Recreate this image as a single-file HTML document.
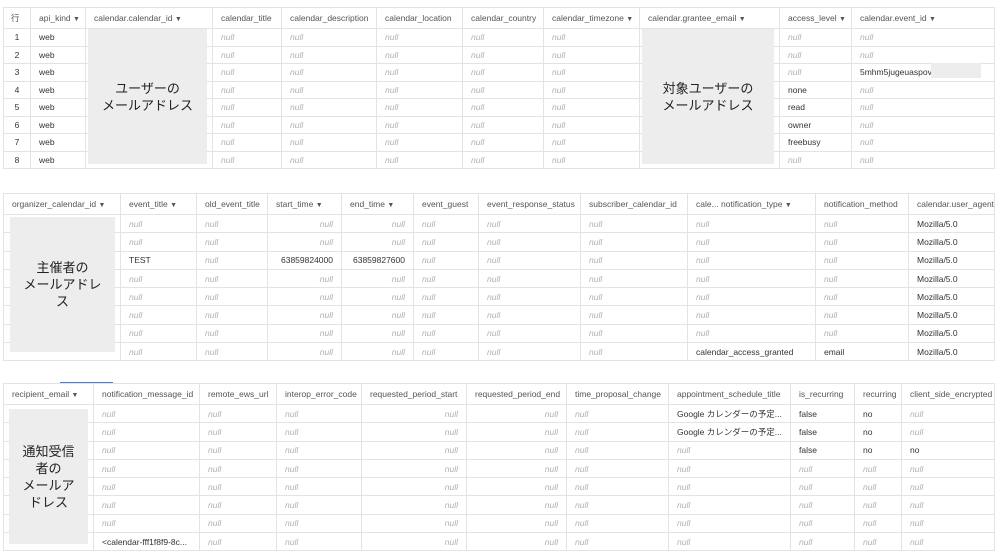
<!DOCTYPE html><html><head><meta charset="utf-8"><style>
body{margin:0;width:1000px;height:554px;background:#fff;position:relative;overflow:hidden;font-family:"Liberation Sans","Noto Sans CJK JP",sans-serif}
table{position:absolute;border-collapse:collapse;table-layout:fixed;font-size:8.5px;color:#333}
td,th{border:1px solid #e3e3e3;padding:0 0 0 8px;white-space:nowrap;overflow:hidden;text-overflow:clip;height:17.3px;text-align:left;font-weight:normal}
table.t1 td{height:16.5px}
th{color:#555;height:20px;font-size:8.5px}
td.n{color:#b0b0b0;font-style:italic}
td.r{text-align:right;padding-right:8px}
td.c{text-align:center;padding:0}
.g{position:absolute;background:#ededed;display:flex;align-items:center;justify-content:center;text-align:center;font-size:13px;color:#222;line-height:17px}
.ar{font-size:7px}
</style></head><body>

<table class="t1" style="left:3px;top:7px;width:992px">
<colgroup><col style="width:27px"><col style="width:55px"><col style="width:127px"><col style="width:69px"><col style="width:95px"><col style="width:86px"><col style="width:81px"><col style="width:96px"><col style="width:140px"><col style="width:72px"><col></colgroup>
<tr><th style="padding-left:7px">行</th><th>api_kind <span class="ar">▼</span></th><th>calendar.calendar_id <span class="ar">▼</span></th><th>calendar_title</th><th>calendar_description</th><th>calendar_location</th><th>calendar_country</th><th>calendar_timezone <span class="ar">▼</span></th><th>calendar.grantee_email <span class="ar">▼</span></th><th>access_level <span class="ar">▼</span></th><th>calendar.event_id <span class="ar">▼</span></th></tr>
<tr><td class="c">1</td><td>web</td><td></td><td class="n">null</td><td class="n">null</td><td class="n">null</td><td class="n">null</td><td class="n">null</td><td></td><td class="n">null</td><td class="n">null</td></tr>
<tr><td class="c">2</td><td>web</td><td></td><td class="n">null</td><td class="n">null</td><td class="n">null</td><td class="n">null</td><td class="n">null</td><td></td><td class="n">null</td><td class="n">null</td></tr>
<tr><td class="c">3</td><td>web</td><td></td><td class="n">null</td><td class="n">null</td><td class="n">null</td><td class="n">null</td><td class="n">null</td><td></td><td class="n">null</td><td>5mhm5jugeuaspov</td></tr>
<tr><td class="c">4</td><td>web</td><td></td><td class="n">null</td><td class="n">null</td><td class="n">null</td><td class="n">null</td><td class="n">null</td><td></td><td>none</td><td class="n">null</td></tr>
<tr><td class="c">5</td><td>web</td><td></td><td class="n">null</td><td class="n">null</td><td class="n">null</td><td class="n">null</td><td class="n">null</td><td></td><td>read</td><td class="n">null</td></tr>
<tr><td class="c">6</td><td>web</td><td></td><td class="n">null</td><td class="n">null</td><td class="n">null</td><td class="n">null</td><td class="n">null</td><td></td><td>owner</td><td class="n">null</td></tr>
<tr><td class="c">7</td><td>web</td><td></td><td class="n">null</td><td class="n">null</td><td class="n">null</td><td class="n">null</td><td class="n">null</td><td></td><td>freebusy</td><td class="n">null</td></tr>
<tr><td class="c">8</td><td>web</td><td></td><td class="n">null</td><td class="n">null</td><td class="n">null</td><td class="n">null</td><td class="n">null</td><td></td><td class="n">null</td><td class="n">null</td></tr>
</table>
<div class="g" style="left:88px;top:29px;width:119px;height:135px">ユーザーの<br>メールアドレス</div>
<div class="g" style="left:642px;top:29px;width:132px;height:135px">対象ユーザーの<br>メールアドレス</div>
<div class="g" style="left:931px;top:63px;width:50px;height:15px"></div>

<table style="left:3px;top:193px;width:992px">
<colgroup><col style="width:117px"><col style="width:76px"><col style="width:71px"><col style="width:74px"><col style="width:72px"><col style="width:65px"><col style="width:102px"><col style="width:107px"><col style="width:128px"><col style="width:93px"><col></colgroup>
<tr><th>organizer_calendar_id <span class="ar">▼</span></th><th>event_title <span class="ar">▼</span></th><th>old_event_title</th><th>start_time <span class="ar">▼</span></th><th>end_time <span class="ar">▼</span></th><th>event_guest</th><th>event_response_status</th><th>subscriber_calendar_id</th><th>cale... notification_type <span class="ar">▼</span></th><th>notification_method</th><th>calendar.user_agent</th></tr>
<tr><td></td><td class="n">null</td><td class="n">null</td><td class="n r">null</td><td class="n r">null</td><td class="n">null</td><td class="n">null</td><td class="n">null</td><td class="n">null</td><td class="n">null</td><td>Mozilla/5.0</td></tr>
<tr><td></td><td class="n">null</td><td class="n">null</td><td class="n r">null</td><td class="n r">null</td><td class="n">null</td><td class="n">null</td><td class="n">null</td><td class="n">null</td><td class="n">null</td><td>Mozilla/5.0</td></tr>
<tr><td></td><td>TEST</td><td class="n">null</td><td class="r">63859824000</td><td class="r">63859827600</td><td class="n">null</td><td class="n">null</td><td class="n">null</td><td class="n">null</td><td class="n">null</td><td>Mozilla/5.0</td></tr>
<tr><td></td><td class="n">null</td><td class="n">null</td><td class="n r">null</td><td class="n r">null</td><td class="n">null</td><td class="n">null</td><td class="n">null</td><td class="n">null</td><td class="n">null</td><td>Mozilla/5.0</td></tr>
<tr><td></td><td class="n">null</td><td class="n">null</td><td class="n r">null</td><td class="n r">null</td><td class="n">null</td><td class="n">null</td><td class="n">null</td><td class="n">null</td><td class="n">null</td><td>Mozilla/5.0</td></tr>
<tr><td></td><td class="n">null</td><td class="n">null</td><td class="n r">null</td><td class="n r">null</td><td class="n">null</td><td class="n">null</td><td class="n">null</td><td class="n">null</td><td class="n">null</td><td>Mozilla/5.0</td></tr>
<tr><td></td><td class="n">null</td><td class="n">null</td><td class="n r">null</td><td class="n r">null</td><td class="n">null</td><td class="n">null</td><td class="n">null</td><td class="n">null</td><td class="n">null</td><td>Mozilla/5.0</td></tr>
<tr><td></td><td class="n">null</td><td class="n">null</td><td class="n r">null</td><td class="n r">null</td><td class="n">null</td><td class="n">null</td><td class="n">null</td><td>calendar_access_granted</td><td>email</td><td>Mozilla/5.0</td></tr>
</table>
<div class="g" style="left:10px;top:217px;width:105px;height:135px">主催者の<br>メールアドレ<br>ス</div>

<div style="position:absolute;left:60px;top:382px;width:53px;height:1px;background:#4a7be0"></div>
<table style="left:3px;top:383px;width:992px">
<colgroup><col style="width:90px"><col style="width:106px"><col style="width:77px"><col style="width:85px"><col style="width:105px"><col style="width:100px"><col style="width:102px"><col style="width:122px"><col style="width:64px"><col style="width:47px"><col></colgroup>
<tr><th>recipient_email <span class="ar">▼</span></th><th>notification_message_id</th><th>remote_ews_url</th><th>interop_error_code</th><th>requested_period_start</th><th>requested_period_end</th><th>time_proposal_change</th><th>appointment_schedule_title</th><th>is_recurring</th><th>recurring</th><th>client_side_encrypted</th></tr>
<tr><td></td><td class="n">null</td><td class="n">null</td><td class="n">null</td><td class="n r">null</td><td class="n r">null</td><td class="n">null</td><td>Google カレンダーの予定...</td><td>false</td><td>no</td><td class="n">null</td></tr>
<tr><td></td><td class="n">null</td><td class="n">null</td><td class="n">null</td><td class="n r">null</td><td class="n r">null</td><td class="n">null</td><td>Google カレンダーの予定...</td><td>false</td><td>no</td><td class="n">null</td></tr>
<tr><td></td><td class="n">null</td><td class="n">null</td><td class="n">null</td><td class="n r">null</td><td class="n r">null</td><td class="n">null</td><td class="n">null</td><td>false</td><td>no</td><td>no</td></tr>
<tr><td></td><td class="n">null</td><td class="n">null</td><td class="n">null</td><td class="n r">null</td><td class="n r">null</td><td class="n">null</td><td class="n">null</td><td class="n">null</td><td class="n">null</td><td class="n">null</td></tr>
<tr><td></td><td class="n">null</td><td class="n">null</td><td class="n">null</td><td class="n r">null</td><td class="n r">null</td><td class="n">null</td><td class="n">null</td><td class="n">null</td><td class="n">null</td><td class="n">null</td></tr>
<tr><td></td><td class="n">null</td><td class="n">null</td><td class="n">null</td><td class="n r">null</td><td class="n r">null</td><td class="n">null</td><td class="n">null</td><td class="n">null</td><td class="n">null</td><td class="n">null</td></tr>
<tr><td></td><td class="n">null</td><td class="n">null</td><td class="n">null</td><td class="n r">null</td><td class="n r">null</td><td class="n">null</td><td class="n">null</td><td class="n">null</td><td class="n">null</td><td class="n">null</td></tr>
<tr><td></td><td>&lt;calendar-fff1f8f9-8c...</td><td class="n">null</td><td class="n">null</td><td class="n r">null</td><td class="n r">null</td><td class="n">null</td><td class="n">null</td><td class="n">null</td><td class="n">null</td><td class="n">null</td></tr>
</table>
<div class="g" style="left:9px;top:409px;width:79px;height:135px">通知受信<br>者の<br>メールア<br>ドレス</div>
</body></html>
